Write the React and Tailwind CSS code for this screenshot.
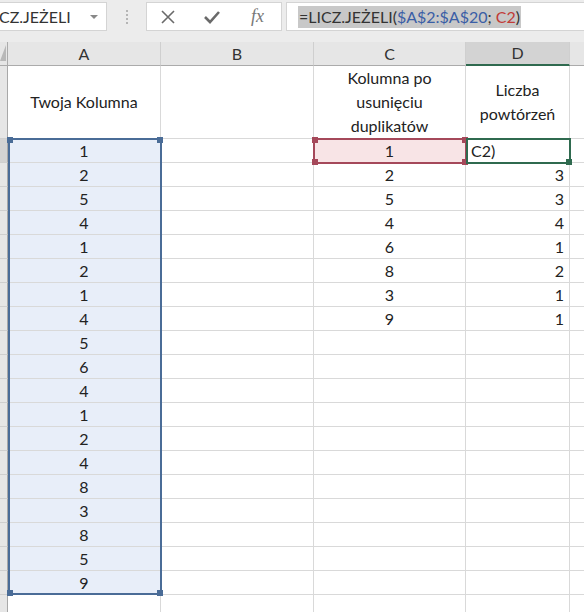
import React from 'react'

const colA = [1, 2, 5, 4, 1, 2, 1, 4, 5, 6, 4, 1, 2, 4, 8, 3, 8, 5, 9]
const colC = [1, 2, 5, 4, 6, 8, 3, 9]
const colD = ['C2)', 3, 3, 4, 1, 2, 1, 1]

const cell = 'border-r border-b border-[#d9d9d9]'

// corner handle of a range reference
const Handle = ({ pos, color }) => (
  <span className={`absolute w-[6px] h-[6px] ${pos} ${color}`} />
)

export default function App() {
  const rows = Array.from({ length: 20 }, (_, i) => i)

  return (
    <div
      className="w-[584px] h-[612px] overflow-hidden bg-white text-[16px] text-[#222]"
      style={{ fontFamily: 'Lato, "Open Sans", sans-serif' }}
    >
      {/* Formula bar */}
      <div className="h-[42px] bg-[#ececec] flex items-start pt-[2px]">
        <div className="w-[107px] h-[29px] bg-white border border-[#d4d4d4] border-l-0 flex items-center justify-between pr-[8px]">
          <span className="text-[16px] text-[#333] -ml-[1px]">CZ.JEŻELI</span>
          <span className="w-0 h-0 border-l-[4px] border-r-[4px] border-t-[4px] border-l-transparent border-r-transparent border-t-[#888]" />
        </div>
        <div className="w-[39px] h-[29px] flex flex-col items-center justify-center gap-[2px]">
          <span className="w-[2px] h-[2px] bg-[#b5b5b5]" />
          <span className="w-[2px] h-[2px] bg-[#b5b5b5]" />
          <span className="w-[2px] h-[2px] bg-[#b5b5b5]" />
          <span className="w-[2px] h-[2px] bg-[#b5b5b5]" />
        </div>
        <div className="w-[136px] h-[29px] bg-white border border-[#d4d4d4] flex items-center">
          <svg width="16" height="16" viewBox="0 0 16 16" className="ml-[13px]">
            <path d="M2 2 L14 14 M14 2 L2 14" stroke="#6a6a6a" strokeWidth="1.6" />
          </svg>
          <svg width="18" height="16" viewBox="0 0 18 16" className="ml-[27px]">
            <path d="M2 8 L7 13 L16 3" stroke="#6a6a6a" strokeWidth="2.6" fill="none" />
          </svg>
          <span
            className="ml-[30px] text-[18px] italic text-[#777]"
            style={{ fontFamily: '"Liberation Serif", serif' }}
          >
            fx
          </span>
        </div>
        <div className="ml-[4px] flex-1 h-[29px] bg-white border border-[#d4d4d4] border-r-0 flex items-center pl-[11px]">
          <span className="bg-[#c8c8c8] text-[16px] leading-[22px] px-[1px] text-[#333]">
            =LICZ.JEŻELI(<span className="text-[#3a5ea6]">$A$2:$A$20</span>;{' '}
            <span className="text-[#c23b37]">C2</span>)
          </span>
        </div>
      </div>

      {/* Sheet */}
      <div className="relative">
        <div className="grid grid-cols-[8px_153px_153px_152px_104px_1fr] grid-rows-[24px_73px_repeat(20,24px)]">
          {/* Column headers */}
          <div className="bg-[#e6e6e6] border-r border-b border-[#ababab] flex items-end pb-[4px]">
            <svg width="6" height="16" viewBox="0 0 6 16">
              <path d="M6 0 L6 16 L0 16 Z" fill="#b8b8b8" />
            </svg>
          </div>
          {['A', 'B', 'C'].map((c) => (
            <div key={c} className="bg-[#e6e6e6] border-r border-b border-[#ababab] border-r-[#cfcfcf] flex items-center justify-center text-[16px] text-[#333]">
              {c}
            </div>
          ))}
          <div className="bg-[#d3d3d3] border-r border-[#cfcfcf] border-b-2 border-b-[#2f6a4f] flex items-center justify-center text-[16px] text-[#333]">
            D
          </div>
          <div className="bg-[#e6e6e6] border-b border-[#ababab]" />

          {/* Row 1 */}
          <div className="bg-[#e6e6e6] border-r border-b border-r-[#a8a8a8] border-b-[#cfcfcf]" />
          <div className={`${cell} flex items-center justify-center`}>Twoja Kolumna</div>
          <div className={cell} />
          <div className={`${cell} flex items-center justify-center text-center leading-[24px]`}>
            Kolumna po<br />usunięciu<br />duplikatów
          </div>
          <div className={`${cell} flex items-center justify-center text-center leading-[24px]`}>
            Liczba<br />powtórzeń
          </div>
          <div className="border-b border-[#d9d9d9]" />

          {/* Data rows */}
          {rows.map((i) => (
            <React.Fragment key={i}>
              <div
                className={`border-r border-b border-r-[#a8a8a8] border-b-[#cfcfcf] ${
                  i === 0 ? 'bg-[#d3d3d3]' : 'bg-[#e6e6e6]'
                }`}
              />
              <div className={`${cell} flex items-center justify-center ${i < 19 ? 'bg-[#e8eef9]' : ''}`}>
                {colA[i]}
              </div>
              <div className={cell} />
              <div className={`${cell} flex items-center justify-center ${i === 0 ? 'bg-[#f8e4e6]' : ''}`}>
                {colC[i]}
              </div>
              <div className={`${cell} flex items-center ${i === 0 ? 'justify-start pl-[5px]' : 'justify-end pr-[5px]'}`}>
                {colD[i]}
              </div>
              <div className="border-b border-[#d9d9d9]" />
            </React.Fragment>
          ))}
        </div>

        {/* Range $A$2:$A$20 */}
        <div className="absolute left-[8px] top-[96px] w-[154px] h-[457px] border-2 border-[#4a6c97]">
          <Handle pos="-left-[3px] -top-[3px]" color="bg-[#4a6c97]" />
          <Handle pos="-right-[3px] -top-[3px]" color="bg-[#4a6c97]" />
          <Handle pos="-left-[3px] -bottom-[3px]" color="bg-[#4a6c97]" />
          <Handle pos="-right-[3px] -bottom-[3px]" color="bg-[#4a6c97]" />
        </div>

        {/* Range C2 */}
        <div className="absolute left-[313px] top-[96px] w-[154px] h-[26px] border-2 border-[#a5485a]">
          <Handle pos="-left-[3px] -top-[3px]" color="bg-[#a5485a]" />
          <Handle pos="-right-[3px] -top-[3px]" color="bg-[#a5485a]" />
          <Handle pos="-left-[3px] -bottom-[3px]" color="bg-[#a5485a]" />
          <Handle pos="-right-[3px] -bottom-[3px]" color="bg-[#a5485a]" />
        </div>

        {/* Active cell D2 */}
        <div className="absolute left-[466px] top-[96px] w-[105px] h-[26px] border-2 border-[#2f6a4f]">
          <Handle pos="-right-[3px] -bottom-[3px]" color="bg-[#2f6a4f]" />
        </div>
      </div>
    </div>
  )
}
